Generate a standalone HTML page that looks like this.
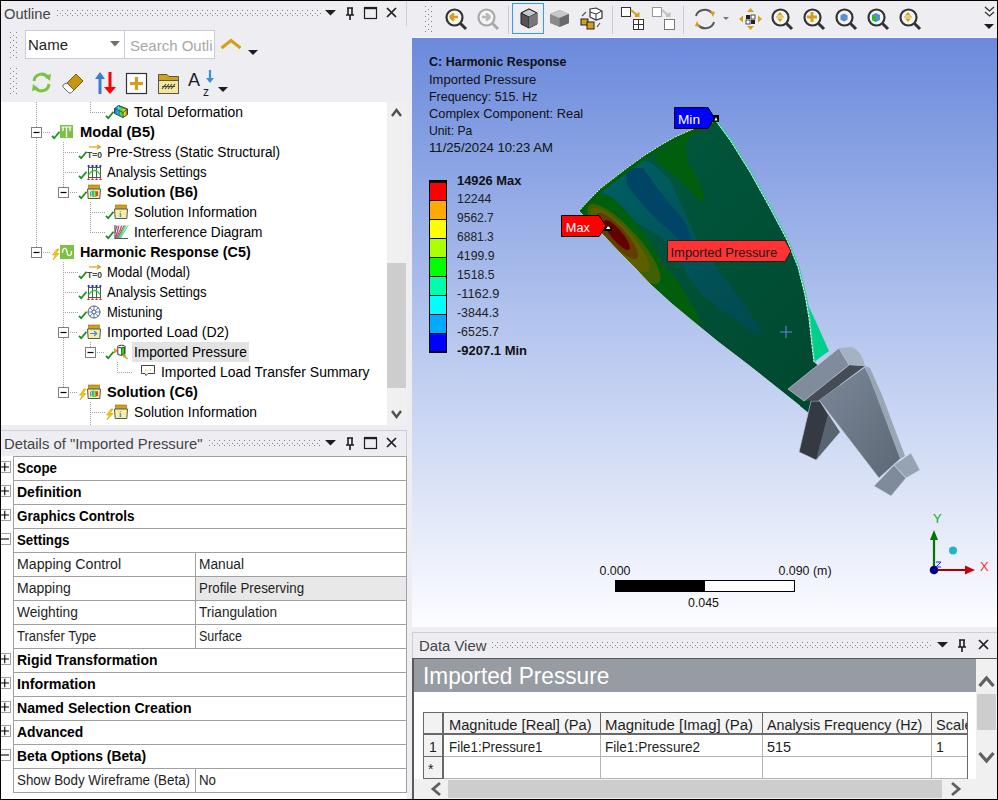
<!DOCTYPE html><html><head><meta charset="utf-8"><style>
*{margin:0;padding:0;box-sizing:border-box}
html,body{width:998px;height:800px;overflow:hidden;background:#EEEEF2;font-family:"Liberation Sans",sans-serif;color:#1E1E1E}
.a{position:absolute}
.t{position:absolute;white-space:nowrap;line-height:1}
svg{position:absolute;overflow:visible}
</style></head><body><div class="a" style="left:0px;top:0px;width:998px;height:1px;background:#000"></div><div class="a" style="left:0px;top:0px;width:1px;height:800px;background:#000"></div><div class="a" style="left:997px;top:0px;width:1px;height:800px;background:#000"></div><div class="a" style="left:0px;top:799px;width:998px;height:1px;background:#000"></div><div class="t" style="left:4px;top:6.30px;font-size:15px;color:#444;transform:scaleX(0.9804);transform-origin:0 0;">Outline</div><svg style="left:57px;top:10px" width="265" height="7" viewBox="0 0 265 7"><g fill="#858585"><rect x="0" y="0" width="1" height="1"/><rect x="0" y="5" width="1" height="1"/><rect x="3" y="3" width="1" height="1"/><rect x="5" y="0" width="1" height="1"/><rect x="5" y="5" width="1" height="1"/><rect x="8" y="3" width="1" height="1"/><rect x="10" y="0" width="1" height="1"/><rect x="10" y="5" width="1" height="1"/><rect x="13" y="3" width="1" height="1"/><rect x="15" y="0" width="1" height="1"/><rect x="15" y="5" width="1" height="1"/><rect x="18" y="3" width="1" height="1"/><rect x="20" y="0" width="1" height="1"/><rect x="20" y="5" width="1" height="1"/><rect x="23" y="3" width="1" height="1"/><rect x="25" y="0" width="1" height="1"/><rect x="25" y="5" width="1" height="1"/><rect x="28" y="3" width="1" height="1"/><rect x="30" y="0" width="1" height="1"/><rect x="30" y="5" width="1" height="1"/><rect x="33" y="3" width="1" height="1"/><rect x="35" y="0" width="1" height="1"/><rect x="35" y="5" width="1" height="1"/><rect x="38" y="3" width="1" height="1"/><rect x="40" y="0" width="1" height="1"/><rect x="40" y="5" width="1" height="1"/><rect x="43" y="3" width="1" height="1"/><rect x="45" y="0" width="1" height="1"/><rect x="45" y="5" width="1" height="1"/><rect x="48" y="3" width="1" height="1"/><rect x="50" y="0" width="1" height="1"/><rect x="50" y="5" width="1" height="1"/><rect x="53" y="3" width="1" height="1"/><rect x="55" y="0" width="1" height="1"/><rect x="55" y="5" width="1" height="1"/><rect x="58" y="3" width="1" height="1"/><rect x="60" y="0" width="1" height="1"/><rect x="60" y="5" width="1" height="1"/><rect x="63" y="3" width="1" height="1"/><rect x="65" y="0" width="1" height="1"/><rect x="65" y="5" width="1" height="1"/><rect x="68" y="3" width="1" height="1"/><rect x="70" y="0" width="1" height="1"/><rect x="70" y="5" width="1" height="1"/><rect x="73" y="3" width="1" height="1"/><rect x="75" y="0" width="1" height="1"/><rect x="75" y="5" width="1" height="1"/><rect x="78" y="3" width="1" height="1"/><rect x="80" y="0" width="1" height="1"/><rect x="80" y="5" width="1" height="1"/><rect x="83" y="3" width="1" height="1"/><rect x="85" y="0" width="1" height="1"/><rect x="85" y="5" width="1" height="1"/><rect x="88" y="3" width="1" height="1"/><rect x="90" y="0" width="1" height="1"/><rect x="90" y="5" width="1" height="1"/><rect x="93" y="3" width="1" height="1"/><rect x="95" y="0" width="1" height="1"/><rect x="95" y="5" width="1" height="1"/><rect x="98" y="3" width="1" height="1"/><rect x="100" y="0" width="1" height="1"/><rect x="100" y="5" width="1" height="1"/><rect x="103" y="3" width="1" height="1"/><rect x="105" y="0" width="1" height="1"/><rect x="105" y="5" width="1" height="1"/><rect x="108" y="3" width="1" height="1"/><rect x="110" y="0" width="1" height="1"/><rect x="110" y="5" width="1" height="1"/><rect x="113" y="3" width="1" height="1"/><rect x="115" y="0" width="1" height="1"/><rect x="115" y="5" width="1" height="1"/><rect x="118" y="3" width="1" height="1"/><rect x="120" y="0" width="1" height="1"/><rect x="120" y="5" width="1" height="1"/><rect x="123" y="3" width="1" height="1"/><rect x="125" y="0" width="1" height="1"/><rect x="125" y="5" width="1" height="1"/><rect x="128" y="3" width="1" height="1"/><rect x="130" y="0" width="1" height="1"/><rect x="130" y="5" width="1" height="1"/><rect x="133" y="3" width="1" height="1"/><rect x="135" y="0" width="1" height="1"/><rect x="135" y="5" width="1" height="1"/><rect x="138" y="3" width="1" height="1"/><rect x="140" y="0" width="1" height="1"/><rect x="140" y="5" width="1" height="1"/><rect x="143" y="3" width="1" height="1"/><rect x="145" y="0" width="1" height="1"/><rect x="145" y="5" width="1" height="1"/><rect x="148" y="3" width="1" height="1"/><rect x="150" y="0" width="1" height="1"/><rect x="150" y="5" width="1" height="1"/><rect x="153" y="3" width="1" height="1"/><rect x="155" y="0" width="1" height="1"/><rect x="155" y="5" width="1" height="1"/><rect x="158" y="3" width="1" height="1"/><rect x="160" y="0" width="1" height="1"/><rect x="160" y="5" width="1" height="1"/><rect x="163" y="3" width="1" height="1"/><rect x="165" y="0" width="1" height="1"/><rect x="165" y="5" width="1" height="1"/><rect x="168" y="3" width="1" height="1"/><rect x="170" y="0" width="1" height="1"/><rect x="170" y="5" width="1" height="1"/><rect x="173" y="3" width="1" height="1"/><rect x="175" y="0" width="1" height="1"/><rect x="175" y="5" width="1" height="1"/><rect x="178" y="3" width="1" height="1"/><rect x="180" y="0" width="1" height="1"/><rect x="180" y="5" width="1" height="1"/><rect x="183" y="3" width="1" height="1"/><rect x="185" y="0" width="1" height="1"/><rect x="185" y="5" width="1" height="1"/><rect x="188" y="3" width="1" height="1"/><rect x="190" y="0" width="1" height="1"/><rect x="190" y="5" width="1" height="1"/><rect x="193" y="3" width="1" height="1"/><rect x="195" y="0" width="1" height="1"/><rect x="195" y="5" width="1" height="1"/><rect x="198" y="3" width="1" height="1"/><rect x="200" y="0" width="1" height="1"/><rect x="200" y="5" width="1" height="1"/><rect x="203" y="3" width="1" height="1"/><rect x="205" y="0" width="1" height="1"/><rect x="205" y="5" width="1" height="1"/><rect x="208" y="3" width="1" height="1"/><rect x="210" y="0" width="1" height="1"/><rect x="210" y="5" width="1" height="1"/><rect x="213" y="3" width="1" height="1"/><rect x="215" y="0" width="1" height="1"/><rect x="215" y="5" width="1" height="1"/><rect x="218" y="3" width="1" height="1"/><rect x="220" y="0" width="1" height="1"/><rect x="220" y="5" width="1" height="1"/><rect x="223" y="3" width="1" height="1"/><rect x="225" y="0" width="1" height="1"/><rect x="225" y="5" width="1" height="1"/><rect x="228" y="3" width="1" height="1"/><rect x="230" y="0" width="1" height="1"/><rect x="230" y="5" width="1" height="1"/><rect x="233" y="3" width="1" height="1"/><rect x="235" y="0" width="1" height="1"/><rect x="235" y="5" width="1" height="1"/><rect x="238" y="3" width="1" height="1"/><rect x="240" y="0" width="1" height="1"/><rect x="240" y="5" width="1" height="1"/><rect x="243" y="3" width="1" height="1"/><rect x="245" y="0" width="1" height="1"/><rect x="245" y="5" width="1" height="1"/><rect x="248" y="3" width="1" height="1"/><rect x="250" y="0" width="1" height="1"/><rect x="250" y="5" width="1" height="1"/><rect x="253" y="3" width="1" height="1"/><rect x="255" y="0" width="1" height="1"/><rect x="255" y="5" width="1" height="1"/><rect x="258" y="3" width="1" height="1"/><rect x="260" y="0" width="1" height="1"/><rect x="260" y="5" width="1" height="1"/><rect x="263" y="3" width="1" height="1"/></g></svg><svg style="left:325px;top:10px" width="12" height="6" viewBox="0 0 12 6"><path d="M0 0 L11 0 L5.5 5.5 Z" fill="#1E1E1E"/></svg><svg style="left:345px;top:7px" width="10" height="13" viewBox="0 0 10 13"><path d="M2 1 H8 M3 1 V8 M7 1 V8 M1 8 H9 M5 8 V13" stroke="#1E1E1E" stroke-width="1.6" fill="none"/></svg><svg style="left:364px;top:7px" width="14" height="13" viewBox="0 0 14 13"><rect x="0.5" y="0.5" width="12" height="11" stroke="#1E1E1E" stroke-width="1.2" fill="none"/><rect x="0" y="0" width="13" height="2.2" fill="#1E1E1E"/></svg><svg style="left:386px;top:7px" width="11" height="11" viewBox="0 0 11 11"><path d="M1 1 L10 10 M10 1 L1 10" stroke="#1E1E1E" stroke-width="1.7"/></svg><div class="a" style="left:406px;top:1px;width:1px;height:25px;background:#CCCEDB"></div><svg style="left:10px;top:32px" width="8" height="27" viewBox="0 0 8 27"><g fill="#858585"><rect x="0" y="0" width="1" height="1"/><rect x="6" y="0" width="1" height="1"/><rect x="3" y="3" width="1" height="1"/><rect x="0" y="5" width="1" height="1"/><rect x="6" y="5" width="1" height="1"/><rect x="3" y="8" width="1" height="1"/><rect x="0" y="10" width="1" height="1"/><rect x="6" y="10" width="1" height="1"/><rect x="3" y="13" width="1" height="1"/><rect x="0" y="15" width="1" height="1"/><rect x="6" y="15" width="1" height="1"/><rect x="3" y="18" width="1" height="1"/><rect x="0" y="20" width="1" height="1"/><rect x="6" y="20" width="1" height="1"/><rect x="3" y="23" width="1" height="1"/><rect x="0" y="25" width="1" height="1"/><rect x="6" y="25" width="1" height="1"/></g></svg><div class="a" style="left:25px;top:30px;width:100px;height:29px;background:#fff;border:1px solid #C9CBDA"></div><div class="t" style="left:28px;top:37.30px;font-size:15px;color:#1E1E1E;">Name</div><svg style="left:110px;top:41px" width="11" height="6" viewBox="0 0 11 6"><path d="M0 0 H10 L5 5.5 Z" fill="#717171"/></svg><div class="a" style="left:124px;top:30px;width:91px;height:29px;background:#fff;border:1px solid #C9CBDA"></div><div class="t" style="left:130px;top:38.30px;font-size:15px;color:#A8A8A8;">Search Outli</div><svg style="left:220px;top:39px" width="23" height="10" viewBox="0 0 23 10"><path d="M1.5 9 L11 1.5 L20.5 9" stroke="#D4A017" stroke-width="3" fill="none"/></svg><svg style="left:248px;top:50px" width="11" height="6" viewBox="0 0 11 6"><path d="M0 0 H10 L5 5 Z" fill="#1E1E1E"/></svg><svg style="left:10px;top:68px" width="8" height="27" viewBox="0 0 8 27"><g fill="#858585"><rect x="0" y="0" width="1" height="1"/><rect x="6" y="0" width="1" height="1"/><rect x="3" y="3" width="1" height="1"/><rect x="0" y="5" width="1" height="1"/><rect x="6" y="5" width="1" height="1"/><rect x="3" y="8" width="1" height="1"/><rect x="0" y="10" width="1" height="1"/><rect x="6" y="10" width="1" height="1"/><rect x="3" y="13" width="1" height="1"/><rect x="0" y="15" width="1" height="1"/><rect x="6" y="15" width="1" height="1"/><rect x="3" y="18" width="1" height="1"/><rect x="0" y="20" width="1" height="1"/><rect x="6" y="20" width="1" height="1"/><rect x="3" y="23" width="1" height="1"/><rect x="0" y="25" width="1" height="1"/><rect x="6" y="25" width="1" height="1"/></g></svg><svg style="left:30px;top:72px" width="23" height="21" viewBox="0 0 23 21"><path d="M4 9 A7.5 7.5 0 0 1 18 6" stroke="#7DC242" stroke-width="3" fill="none"/><path d="M19 12 A7.5 7.5 0 0 1 5 15" stroke="#7DC242" stroke-width="3" fill="none"/><path d="M14 4 L21 2 L20 9 Z" fill="#7DC242"/><path d="M9 17 L2 19 L3 12 Z" fill="#7DC242"/></svg><svg style="left:62px;top:72px" width="22" height="22" viewBox="0 0 22 22"><path d="M5 11 L14 2 L21 9 L12 18 Z" fill="#C8960C" stroke="#7A5A10" stroke-width="1"/><path d="M5 11 L12 18 L9.5 20.5 Q8 22 6.5 20.5 L1.5 15.5 Q0 14 1.5 12.5 Z" fill="#fff" stroke="#666" stroke-width="1"/></svg><svg style="left:94px;top:72px" width="22" height="22" viewBox="0 0 22 22"><path d="M6 22 V6" stroke="#3A7BD5" stroke-width="3"/><path d="M1 7 L6 0 L11 7 Z" fill="#3A7BD5"/><path d="M16 0 V16" stroke="#F00" stroke-width="3"/><path d="M10 15 L16 22 L22 15 Z" fill="#F00"/></svg><svg style="left:126px;top:73px" width="22" height="21" viewBox="0 0 22 21"><rect x="0.5" y="0.5" width="20" height="20" fill="#fff" stroke="#333" stroke-width="1.2"/><path d="M10.5 4 V17 M4 10.5 H17" stroke="#D4A017" stroke-width="3.2"/></svg><svg style="left:157px;top:72px" width="23" height="23" viewBox="0 0 23 23"><path d="M1.5 2.5 H10 L12 4.5 H21.5 V21.5 H1.5 Z" fill="#D4A017" stroke="#555" stroke-width="1"/><rect x="1.5" y="8.5" width="20" height="13" fill="#F4E79A" stroke="#555" stroke-width="1"/><path d="M5 17 L9 12 M8 17 L12 12 M11 17 L15 12 M14 17 L18 12 M5 14.5 H18" stroke="#444" stroke-width="1.1" fill="none"/></svg><div class="t" style="left:188px;top:70.76px;font-size:18px;color:#1E1E1E;">A</div><div class="t" style="left:203px;top:85.84px;font-size:12px;color:#1E1E1E;">z</div><svg style="left:205px;top:70px" width="10" height="14" viewBox="0 0 10 14"><path d="M5 0 V9" stroke="#3A8EE6" stroke-width="2.2"/><path d="M1 8 L5 13 L9 8 Z" fill="#3A8EE6"/></svg><svg style="left:218px;top:87px" width="11" height="6" viewBox="0 0 11 6"><path d="M0 0 H10 L5 5 Z" fill="#1E1E1E"/></svg><div class="a" style="left:1px;top:102px;width:386px;height:323px;background:#fff"></div><div class="a" style="left:387px;top:102px;width:20px;height:323px;background:#F0F0F0"></div><svg style="left:391px;top:108px" width="11" height="9" viewBox="0 0 11 9"><path d="M1 8 L5.5 2 L10 8" stroke="#505050" stroke-width="2.4" fill="none"/></svg><div class="a" style="left:387px;top:263px;width:19px;height:125px;background:#CDCDCD"></div><svg style="left:391px;top:410px" width="11" height="9" viewBox="0 0 11 9"><path d="M1 1 L5.5 7 L10 1" stroke="#505050" stroke-width="2.4" fill="none"/></svg><div class="a" style="left:36px;top:102px;width:1px;height:25px;background-image:linear-gradient(to bottom,#A0A0A0 50%,transparent 50%);background-size:1px 2px"></div><div class="a" style="left:36px;top:138px;width:1px;height:109px;background-image:linear-gradient(to bottom,#A0A0A0 50%,transparent 50%);background-size:1px 2px"></div><div class="a" style="left:90px;top:102px;width:1px;height:10px;background-image:linear-gradient(to bottom,#A0A0A0 50%,transparent 50%);background-size:1px 2px"></div><div class="a" style="left:63px;top:142px;width:1px;height:45px;background-image:linear-gradient(to bottom,#A0A0A0 50%,transparent 50%);background-size:1px 2px"></div><div class="a" style="left:90px;top:202px;width:1px;height:30px;background-image:linear-gradient(to bottom,#A0A0A0 50%,transparent 50%);background-size:1px 2px"></div><div class="a" style="left:63px;top:262px;width:1px;height:125px;background-image:linear-gradient(to bottom,#A0A0A0 50%,transparent 50%);background-size:1px 2px"></div><div class="a" style="left:90px;top:342px;width:1px;height:5px;background-image:linear-gradient(to bottom,#A0A0A0 50%,transparent 50%);background-size:1px 2px"></div><div class="a" style="left:117px;top:362px;width:1px;height:10px;background-image:linear-gradient(to bottom,#A0A0A0 50%,transparent 50%);background-size:1px 2px"></div><div class="a" style="left:90px;top:402px;width:1px;height:23px;background-image:linear-gradient(to bottom,#A0A0A0 50%,transparent 50%);background-size:1px 2px"></div><div class="a" style="left:90px;top:112px;width:15px;height:1px;background-image:linear-gradient(to right,#A0A0A0 50%,transparent 50%);background-size:2px 1px"></div><svg style="left:105px;top:111px" width="9" height="8" viewBox="0 0 9 8"><path d="M1 4.8 L3.2 7.2 L8.5 0.8" stroke="#14901A" stroke-width="1.8" fill="none"/></svg><svg style="left:114px;top:105px" width="14" height="14" viewBox="0 0 14 14"><defs><linearGradient id="rb" x1="0" x2="1" y1="0" y2="0"><stop offset="0" stop-color="#2050F0"/><stop offset="0.3" stop-color="#20E0E0"/><stop offset="0.55" stop-color="#40E020"/><stop offset="0.8" stop-color="#F0E010"/><stop offset="1" stop-color="#F02010"/></linearGradient></defs><path d="M0.5 3.5 L4.5 0.5 L13.5 4 L13.5 9.5 L9 12.5 L0.5 8.5 Z" fill="url(#rb)" stroke="#444" stroke-width="1"/><path d="M0.5 3.5 L9 7.5 L13.5 4 M9 7.5 V12.5 M5 5.5 V10.5 M4.5 0.5 L13 4.5" stroke="#444" stroke-width="0.9" fill="none"/></svg><div class="t" style="left:134px;top:105.15px;font-size:14px;color:#000;transform:scaleX(0.9939);transform-origin:0 0;">Total Deformation</div><svg style="left:31px;top:127px" width="11" height="11" viewBox="0 0 11 11"><rect x="0.5" y="0.5" width="10" height="10" fill="#fff" stroke="#808080" stroke-width="1"/><path d="M2.5 5.5 H8.5" stroke="#000" stroke-width="1.2"/></svg><div class="a" style="left:43px;top:132px;width:8px;height:1px;background-image:linear-gradient(to right,#A0A0A0 50%,transparent 50%);background-size:2px 1px"></div><svg style="left:51px;top:131px" width="9" height="8" viewBox="0 0 9 8"><path d="M1 4.8 L3.2 7.2 L8.5 0.8" stroke="#14901A" stroke-width="1.8" fill="none"/></svg><svg style="left:60px;top:125px" width="14" height="14" viewBox="0 0 14 14"><rect x="0" y="0" width="13" height="13" fill="#7DC242"/><path d="M3 2 V6 M6.5 2 V12 M10 2 V6" stroke="#fff" stroke-width="1.3"/><path d="M1.5 2 H11.5" stroke="#fff" stroke-width="1"/></svg><div class="t" style="left:80px;top:124.81px;font-size:14.4px;color:#000;font-weight:bold;transform:scaleX(1.0195);transform-origin:0 0;">Modal (B5)</div><div class="a" style="left:63px;top:152px;width:15px;height:1px;background-image:linear-gradient(to right,#A0A0A0 50%,transparent 50%);background-size:2px 1px"></div><svg style="left:78px;top:151px" width="9" height="8" viewBox="0 0 9 8"><path d="M1 4.8 L3.2 7.2 L8.5 0.8" stroke="#14901A" stroke-width="1.8" fill="none"/></svg><svg style="left:87px;top:145px" width="14" height="14" viewBox="0 0 14 14"><path d="M2 2 H13" stroke="#D4A017" stroke-width="1.2"/><path d="M10 0 L13.5 2 L10 4" stroke="#D4A017" stroke-width="1.1" fill="none"/><text x="0" y="13" font-size="8.5" font-weight="bold" fill="#444" font-family="Liberation Sans">T=0</text></svg><div class="t" style="left:107px;top:145.15px;font-size:14px;color:#000;transform:scaleX(0.9713);transform-origin:0 0;">Pre-Stress (Static Structural)</div><div class="a" style="left:63px;top:172px;width:15px;height:1px;background-image:linear-gradient(to right,#A0A0A0 50%,transparent 50%);background-size:2px 1px"></div><svg style="left:78px;top:171px" width="9" height="8" viewBox="0 0 9 8"><path d="M1 4.8 L3.2 7.2 L8.5 0.8" stroke="#14901A" stroke-width="1.8" fill="none"/></svg><svg style="left:87px;top:165px" width="14" height="14" viewBox="0 0 14 14"><rect x="1.5" y="2.5" width="12" height="10" fill="#fff" stroke="#555" stroke-width="1"/><path d="M5.5 2.5 V12.5 M9.5 2.5 V12.5" stroke="#555" stroke-width="1"/><path d="M0.5 1 H3 M4 1 H7 M8 1 H11 M12 1 H14.5 M1.5 0 V2 M5.5 0 V2 M9.5 0 V2 M13.5 0 V2" stroke="#1030F0" stroke-width="1.1"/><path d="M1.5 13 L0 15 H3 Z M5.5 13 L4 15 H7 Z M9.5 13 L8 15 H11 Z M13.5 13 L12 15 H15 Z" fill="#F01010"/><path d="M1.5 10 Q7.5 1 13.5 10" stroke="#20D020" stroke-width="1.3" fill="none"/></svg><div class="t" style="left:107px;top:165.15px;font-size:14px;color:#000;transform:scaleX(0.9335);transform-origin:0 0;">Analysis Settings</div><svg style="left:58px;top:187px" width="11" height="11" viewBox="0 0 11 11"><rect x="0.5" y="0.5" width="10" height="10" fill="#fff" stroke="#808080" stroke-width="1"/><path d="M2.5 5.5 H8.5" stroke="#000" stroke-width="1.2"/></svg><div class="a" style="left:70px;top:192px;width:8px;height:1px;background-image:linear-gradient(to right,#A0A0A0 50%,transparent 50%);background-size:2px 1px"></div><svg style="left:78px;top:191px" width="9" height="8" viewBox="0 0 9 8"><path d="M1 4.8 L3.2 7.2 L8.5 0.8" stroke="#14901A" stroke-width="1.8" fill="none"/></svg><svg style="left:87px;top:185px" width="14" height="14" viewBox="0 0 14 14"><rect x="1.5" y="0" width="11" height="4.5" fill="#D4A017" stroke="#8A6A10" stroke-width="0.6"/><path d="M0.5 4 H13.5 L12.8 13.5 H1.2 Z" fill="#F8EEA8" stroke="#555" stroke-width="1"/><path d="M3 7 L6 5.5 L11 6.5 V10.5 L8 12 L3 11 Z" fill="#40A0E0"/><path d="M6 5.8 L9 6.2 V11.5 L6 11.2 Z" fill="#30D040"/><path d="M9 6.4 L11 6.5 V10.5 L9 11.5 Z" fill="#F04020"/><path d="M4.5 7 V11 M7.5 6 V11.5" stroke="#F0E020" stroke-width="0.8"/></svg><div class="t" style="left:107px;top:184.81px;font-size:14.4px;color:#000;font-weight:bold;transform:scaleX(1.0161);transform-origin:0 0;">Solution (B6)</div><div class="a" style="left:90px;top:212px;width:15px;height:1px;background-image:linear-gradient(to right,#A0A0A0 50%,transparent 50%);background-size:2px 1px"></div><svg style="left:105px;top:211px" width="9" height="8" viewBox="0 0 9 8"><path d="M1 4.8 L3.2 7.2 L8.5 0.8" stroke="#14901A" stroke-width="1.8" fill="none"/></svg><svg style="left:114px;top:205px" width="14" height="14" viewBox="0 0 14 14"><rect x="1.5" y="0" width="11" height="4.5" fill="#D4A017" stroke="#8A6A10" stroke-width="0.6"/><path d="M0.5 4 H13.5 L12.8 13.5 H1.2 Z" fill="#F8EEA8" stroke="#555" stroke-width="1"/><text x="5" y="12" font-size="8.5" font-weight="bold" fill="#3A8EE6" font-family="Liberation Serif">i</text></svg><div class="t" style="left:134px;top:205.15px;font-size:14px;color:#000;transform:scaleX(0.9882);transform-origin:0 0;">Solution Information</div><div class="a" style="left:90px;top:232px;width:15px;height:1px;background-image:linear-gradient(to right,#A0A0A0 50%,transparent 50%);background-size:2px 1px"></div><svg style="left:105px;top:231px" width="9" height="8" viewBox="0 0 9 8"><path d="M1 4.8 L3.2 7.2 L8.5 0.8" stroke="#14901A" stroke-width="1.8" fill="none"/></svg><svg style="left:114px;top:225px" width="14" height="14" viewBox="0 0 14 14"><path d="M1 0.5 H14 L6 13.5 H1 Z" fill="#fff"/><path d="M1.5 13 L5 0.5 M2.5 13 L8 0.5 M4 13 L10 0.5 M1 8 L3 0.5" stroke="#E03030" stroke-width="1"/><path d="M2 12 Q5 5 4 1 M3.5 13 Q8 6 7 1" stroke="#3060E0" stroke-width="0.6" fill="none"/><path d="M5.5 13 L12 0.5 M4.5 13 L11 0.5 M6.5 13 L14 0.5" stroke="#30D050" stroke-width="0.9"/><path d="M1 0 V13.5 H14" stroke="#555" stroke-width="1.2" fill="none"/></svg><div class="t" style="left:134px;top:225.15px;font-size:14px;color:#000;transform:scaleX(0.9769);transform-origin:0 0;">Interference Diagram</div><svg style="left:31px;top:247px" width="11" height="11" viewBox="0 0 11 11"><rect x="0.5" y="0.5" width="10" height="10" fill="#fff" stroke="#808080" stroke-width="1"/><path d="M2.5 5.5 H8.5" stroke="#000" stroke-width="1.2"/></svg><div class="a" style="left:43px;top:252px;width:8px;height:1px;background-image:linear-gradient(to right,#A0A0A0 50%,transparent 50%);background-size:2px 1px"></div><svg style="left:51px;top:249px" width="9" height="11" viewBox="0 0 9 11"><path d="M6 0 L1.5 6 H4.5 L2 11 L8 4.5 H5 L8 0 Z" fill="#F5D000" stroke="#C9A000" stroke-width="0.6"/></svg><svg style="left:60px;top:245px" width="14" height="14" viewBox="0 0 14 14"><rect x="0" y="0" width="14" height="14" fill="#7DC242"/><path d="M2.5 8 C2.5 2, 6.5 2, 7 7 S11.5 12, 11.5 6" stroke="#fff" stroke-width="1.4" fill="none"/></svg><div class="t" style="left:80px;top:244.81px;font-size:14.4px;color:#000;font-weight:bold;transform:scaleX(0.9974);transform-origin:0 0;">Harmonic Response (C5)</div><div class="a" style="left:63px;top:272px;width:15px;height:1px;background-image:linear-gradient(to right,#A0A0A0 50%,transparent 50%);background-size:2px 1px"></div><svg style="left:78px;top:271px" width="9" height="8" viewBox="0 0 9 8"><path d="M1 4.8 L3.2 7.2 L8.5 0.8" stroke="#14901A" stroke-width="1.8" fill="none"/></svg><svg style="left:87px;top:265px" width="14" height="14" viewBox="0 0 14 14"><path d="M2 2 H13" stroke="#D4A017" stroke-width="1.2"/><path d="M10 0 L13.5 2 L10 4" stroke="#D4A017" stroke-width="1.1" fill="none"/><text x="0" y="13" font-size="8.5" font-weight="bold" fill="#444" font-family="Liberation Sans">T=0</text></svg><div class="t" style="left:107px;top:265.15px;font-size:14px;color:#000;transform:scaleX(0.9282);transform-origin:0 0;">Modal (Modal)</div><div class="a" style="left:63px;top:292px;width:15px;height:1px;background-image:linear-gradient(to right,#A0A0A0 50%,transparent 50%);background-size:2px 1px"></div><svg style="left:78px;top:291px" width="9" height="8" viewBox="0 0 9 8"><path d="M1 4.8 L3.2 7.2 L8.5 0.8" stroke="#14901A" stroke-width="1.8" fill="none"/></svg><svg style="left:87px;top:285px" width="14" height="14" viewBox="0 0 14 14"><rect x="1.5" y="2.5" width="12" height="10" fill="#fff" stroke="#555" stroke-width="1"/><path d="M5.5 2.5 V12.5 M9.5 2.5 V12.5" stroke="#555" stroke-width="1"/><path d="M0.5 1 H3 M4 1 H7 M8 1 H11 M12 1 H14.5 M1.5 0 V2 M5.5 0 V2 M9.5 0 V2 M13.5 0 V2" stroke="#1030F0" stroke-width="1.1"/><path d="M1.5 13 L0 15 H3 Z M5.5 13 L4 15 H7 Z M9.5 13 L8 15 H11 Z M13.5 13 L12 15 H15 Z" fill="#F01010"/><path d="M1.5 10 Q7.5 1 13.5 10" stroke="#20D020" stroke-width="1.3" fill="none"/></svg><div class="t" style="left:107px;top:285.15px;font-size:14px;color:#000;transform:scaleX(0.9335);transform-origin:0 0;">Analysis Settings</div><div class="a" style="left:63px;top:312px;width:15px;height:1px;background-image:linear-gradient(to right,#A0A0A0 50%,transparent 50%);background-size:2px 1px"></div><svg style="left:78px;top:311px" width="9" height="8" viewBox="0 0 9 8"><path d="M1 4.8 L3.2 7.2 L8.5 0.8" stroke="#14901A" stroke-width="1.8" fill="none"/></svg><svg style="left:87px;top:305px" width="14" height="14" viewBox="0 0 14 14"><circle cx="7" cy="7" r="6" fill="#fff" stroke="#555" stroke-width="1"/><circle cx="7" cy="7" r="2" fill="#fff" stroke="#555" stroke-width="1"/><path d="M7 1 V5 M7 9 V13 M1 7 H5 M9 7 H13 M2.8 2.8 L5.6 5.6 M8.4 8.4 L11.2 11.2 M11.2 2.8 L8.4 5.6 M5.6 8.4 L2.8 11.2" stroke="#3A7BD5" stroke-width="0.9"/></svg><div class="t" style="left:107px;top:305.15px;font-size:14px;color:#000;transform:scaleX(0.9250);transform-origin:0 0;">Mistuning</div><svg style="left:58px;top:327px" width="11" height="11" viewBox="0 0 11 11"><rect x="0.5" y="0.5" width="10" height="10" fill="#fff" stroke="#808080" stroke-width="1"/><path d="M2.5 5.5 H8.5" stroke="#000" stroke-width="1.2"/></svg><div class="a" style="left:70px;top:332px;width:8px;height:1px;background-image:linear-gradient(to right,#A0A0A0 50%,transparent 50%);background-size:2px 1px"></div><svg style="left:78px;top:331px" width="9" height="8" viewBox="0 0 9 8"><path d="M1 4.8 L3.2 7.2 L8.5 0.8" stroke="#14901A" stroke-width="1.8" fill="none"/></svg><svg style="left:87px;top:325px" width="14" height="14" viewBox="0 0 14 14"><rect x="1.5" y="0" width="11" height="4.5" fill="#D4A017" stroke="#8A6A10" stroke-width="0.6"/><path d="M0.5 4 H13.5 L12.8 13.5 H1.2 Z" fill="#F8EEA8" stroke="#555" stroke-width="1"/><path d="M3 8.5 H9.5 M7 6 L9.8 8.5 L7 11" stroke="#3A8EE6" stroke-width="1.2" fill="none"/></svg><div class="t" style="left:107px;top:325.15px;font-size:14px;color:#000;transform:scaleX(1.0055);transform-origin:0 0;">Imported Load (D2)</div><svg style="left:85px;top:347px" width="11" height="11" viewBox="0 0 11 11"><rect x="0.5" y="0.5" width="10" height="10" fill="#fff" stroke="#808080" stroke-width="1"/><path d="M2.5 5.5 H8.5" stroke="#000" stroke-width="1.2"/></svg><div class="a" style="left:97px;top:352px;width:8px;height:1px;background-image:linear-gradient(to right,#A0A0A0 50%,transparent 50%);background-size:2px 1px"></div><svg style="left:105px;top:351px" width="9" height="8" viewBox="0 0 9 8"><path d="M1 4.8 L3.2 7.2 L8.5 0.8" stroke="#14901A" stroke-width="1.8" fill="none"/></svg><svg style="left:114px;top:345px" width="14" height="14" viewBox="0 0 14 14"><path d="M0 3 L4 5.8 L0 8.7 Z" fill="#D4A017"/><path d="M3.8 1.5 V9.5 Q7 11.5 11 9 V1.5" fill="#fff" stroke="#333" stroke-width="1"/><ellipse cx="7.4" cy="1.5" rx="3.6" ry="1.3" fill="#fff" stroke="#333" stroke-width="1"/><path d="M7.5 3 L10.5 2 V8.5 L7.5 10 Z" fill="#10E010" stroke="#333" stroke-width="0.7"/><path d="M13.5 14 L10 10.5" stroke="#D4A017" stroke-width="1.4"/><path d="M8.5 9 L12.5 10 L9.5 13 Z" fill="#D4A017"/></svg><div class="a" style="left:132px;top:342px;width:117px;height:20px;background:#E3E3E3"></div><div class="t" style="left:134px;top:345.15px;font-size:14px;color:#000;transform:scaleX(0.9791);transform-origin:0 0;">Imported Pressure</div><div class="a" style="left:117px;top:372px;width:15px;height:1px;background-image:linear-gradient(to right,#A0A0A0 50%,transparent 50%);background-size:2px 1px"></div><svg style="left:141px;top:365px" width="14" height="14" viewBox="0 0 14 14"><path d="M0.5 0.5 H13.5 V8.5 H7 L5 10.5 L4 8.5 H0.5 Z" fill="#fff" stroke="#444" stroke-width="1"/><path d="M4 5 H5 M6.5 5 H7.5 M9 5 H10" stroke="#D4A017" stroke-width="1"/></svg><div class="t" style="left:161px;top:365.15px;font-size:14px;color:#000;transform:scaleX(0.9961);transform-origin:0 0;">Imported Load Transfer Summary</div><svg style="left:58px;top:387px" width="11" height="11" viewBox="0 0 11 11"><rect x="0.5" y="0.5" width="10" height="10" fill="#fff" stroke="#808080" stroke-width="1"/><path d="M2.5 5.5 H8.5" stroke="#000" stroke-width="1.2"/></svg><div class="a" style="left:70px;top:392px;width:8px;height:1px;background-image:linear-gradient(to right,#A0A0A0 50%,transparent 50%);background-size:2px 1px"></div><svg style="left:78px;top:389px" width="9" height="11" viewBox="0 0 9 11"><path d="M6 0 L1.5 6 H4.5 L2 11 L8 4.5 H5 L8 0 Z" fill="#F5D000" stroke="#C9A000" stroke-width="0.6"/></svg><svg style="left:87px;top:385px" width="14" height="14" viewBox="0 0 14 14"><rect x="1.5" y="0" width="11" height="4.5" fill="#D4A017" stroke="#8A6A10" stroke-width="0.6"/><path d="M0.5 4 H13.5 L12.8 13.5 H1.2 Z" fill="#F8EEA8" stroke="#555" stroke-width="1"/><path d="M3 7 L6 5.5 L11 6.5 V10.5 L8 12 L3 11 Z" fill="#40A0E0"/><path d="M6 5.8 L9 6.2 V11.5 L6 11.2 Z" fill="#30D040"/><path d="M9 6.4 L11 6.5 V10.5 L9 11.5 Z" fill="#F04020"/><path d="M4.5 7 V11 M7.5 6 V11.5" stroke="#F0E020" stroke-width="0.8"/></svg><div class="t" style="left:107px;top:384.81px;font-size:14.4px;color:#000;font-weight:bold;transform:scaleX(1.0161);transform-origin:0 0;">Solution (C6)</div><div class="a" style="left:90px;top:412px;width:15px;height:1px;background-image:linear-gradient(to right,#A0A0A0 50%,transparent 50%);background-size:2px 1px"></div><svg style="left:105px;top:409px" width="9" height="11" viewBox="0 0 9 11"><path d="M6 0 L1.5 6 H4.5 L2 11 L8 4.5 H5 L8 0 Z" fill="#F5D000" stroke="#C9A000" stroke-width="0.6"/></svg><svg style="left:114px;top:405px" width="14" height="14" viewBox="0 0 14 14"><rect x="1.5" y="0" width="11" height="4.5" fill="#D4A017" stroke="#8A6A10" stroke-width="0.6"/><path d="M0.5 4 H13.5 L12.8 13.5 H1.2 Z" fill="#F8EEA8" stroke="#555" stroke-width="1"/><text x="5" y="12" font-size="8.5" font-weight="bold" fill="#3A8EE6" font-family="Liberation Serif">i</text></svg><div class="t" style="left:134px;top:405.15px;font-size:14px;color:#000;transform:scaleX(0.9882);transform-origin:0 0;">Solution Information</div><div class="a" style="left:1px;top:425px;width:406px;height:5px;background:#EEEEF2"></div><div class="a" style="left:1px;top:430px;width:406px;height:1px;background:#CCCEDB"></div><div class="a" style="left:406px;top:430px;width:1px;height:26px;background:#CCCEDB"></div><div class="t" style="left:4px;top:436.30px;font-size:15px;color:#444;transform:scaleX(0.9886);transform-origin:0 0;">Details of "Imported Pressure"</div><svg style="left:209px;top:440px" width="113" height="7" viewBox="0 0 113 7"><g fill="#858585"><rect x="0" y="0" width="1" height="1"/><rect x="0" y="5" width="1" height="1"/><rect x="3" y="3" width="1" height="1"/><rect x="5" y="0" width="1" height="1"/><rect x="5" y="5" width="1" height="1"/><rect x="8" y="3" width="1" height="1"/><rect x="10" y="0" width="1" height="1"/><rect x="10" y="5" width="1" height="1"/><rect x="13" y="3" width="1" height="1"/><rect x="15" y="0" width="1" height="1"/><rect x="15" y="5" width="1" height="1"/><rect x="18" y="3" width="1" height="1"/><rect x="20" y="0" width="1" height="1"/><rect x="20" y="5" width="1" height="1"/><rect x="23" y="3" width="1" height="1"/><rect x="25" y="0" width="1" height="1"/><rect x="25" y="5" width="1" height="1"/><rect x="28" y="3" width="1" height="1"/><rect x="30" y="0" width="1" height="1"/><rect x="30" y="5" width="1" height="1"/><rect x="33" y="3" width="1" height="1"/><rect x="35" y="0" width="1" height="1"/><rect x="35" y="5" width="1" height="1"/><rect x="38" y="3" width="1" height="1"/><rect x="40" y="0" width="1" height="1"/><rect x="40" y="5" width="1" height="1"/><rect x="43" y="3" width="1" height="1"/><rect x="45" y="0" width="1" height="1"/><rect x="45" y="5" width="1" height="1"/><rect x="48" y="3" width="1" height="1"/><rect x="50" y="0" width="1" height="1"/><rect x="50" y="5" width="1" height="1"/><rect x="53" y="3" width="1" height="1"/><rect x="55" y="0" width="1" height="1"/><rect x="55" y="5" width="1" height="1"/><rect x="58" y="3" width="1" height="1"/><rect x="60" y="0" width="1" height="1"/><rect x="60" y="5" width="1" height="1"/><rect x="63" y="3" width="1" height="1"/><rect x="65" y="0" width="1" height="1"/><rect x="65" y="5" width="1" height="1"/><rect x="68" y="3" width="1" height="1"/><rect x="70" y="0" width="1" height="1"/><rect x="70" y="5" width="1" height="1"/><rect x="73" y="3" width="1" height="1"/><rect x="75" y="0" width="1" height="1"/><rect x="75" y="5" width="1" height="1"/><rect x="78" y="3" width="1" height="1"/><rect x="80" y="0" width="1" height="1"/><rect x="80" y="5" width="1" height="1"/><rect x="83" y="3" width="1" height="1"/><rect x="85" y="0" width="1" height="1"/><rect x="85" y="5" width="1" height="1"/><rect x="88" y="3" width="1" height="1"/><rect x="90" y="0" width="1" height="1"/><rect x="90" y="5" width="1" height="1"/><rect x="93" y="3" width="1" height="1"/><rect x="95" y="0" width="1" height="1"/><rect x="95" y="5" width="1" height="1"/><rect x="98" y="3" width="1" height="1"/><rect x="100" y="0" width="1" height="1"/><rect x="100" y="5" width="1" height="1"/><rect x="103" y="3" width="1" height="1"/><rect x="105" y="0" width="1" height="1"/><rect x="105" y="5" width="1" height="1"/><rect x="108" y="3" width="1" height="1"/><rect x="110" y="0" width="1" height="1"/><rect x="110" y="5" width="1" height="1"/></g></svg><svg style="left:325px;top:440px" width="12" height="6" viewBox="0 0 12 6"><path d="M0 0 L11 0 L5.5 5.5 Z" fill="#1E1E1E"/></svg><svg style="left:345px;top:437px" width="10" height="13" viewBox="0 0 10 13"><path d="M2 1 H8 M3 1 V8 M7 1 V8 M1 8 H9 M5 8 V13" stroke="#1E1E1E" stroke-width="1.6" fill="none"/></svg><svg style="left:364px;top:437px" width="14" height="13" viewBox="0 0 14 13"><rect x="0.5" y="0.5" width="12" height="11" stroke="#1E1E1E" stroke-width="1.2" fill="none"/><rect x="0" y="0" width="13" height="2.2" fill="#1E1E1E"/></svg><svg style="left:386px;top:437px" width="11" height="11" viewBox="0 0 11 11"><path d="M1 1 L10 10 M10 1 L1 10" stroke="#1E1E1E" stroke-width="1.7"/></svg><div class="a" style="left:1px;top:456px;width:406px;height:343px;background:#fff"></div><div class="a" style="left:13px;top:456px;width:394px;height:1px;background:#A0A0A0"></div><div class="a" style="left:13px;top:456px;width:1px;height:25px;background:#A0A0A0"></div><div class="a" style="left:406px;top:456px;width:1px;height:25px;background:#A0A0A0"></div><svg style="left:-2px;top:461px" width="13" height="12" viewBox="0 0 13 12"><rect x="0.5" y="0.5" width="12" height="11" fill="#fff" stroke="#A0A0A0" stroke-width="1"/><path d="M2.5 6 H11 M6.75 1.8 V10.2" stroke="#000" stroke-width="1.1"/></svg><div class="t" style="left:17px;top:461.06px;font-size:14.1px;color:#000;font-weight:bold;transform:scaleX(0.9453);transform-origin:0 0;">Scope</div><div class="a" style="left:13px;top:480px;width:394px;height:1px;background:#A0A0A0"></div><div class="a" style="left:13px;top:480px;width:1px;height:25px;background:#A0A0A0"></div><div class="a" style="left:406px;top:480px;width:1px;height:25px;background:#A0A0A0"></div><svg style="left:-2px;top:485px" width="13" height="12" viewBox="0 0 13 12"><rect x="0.5" y="0.5" width="12" height="11" fill="#fff" stroke="#A0A0A0" stroke-width="1"/><path d="M2.5 6 H11 M6.75 1.8 V10.2" stroke="#000" stroke-width="1.1"/></svg><div class="t" style="left:17px;top:485.06px;font-size:14.1px;color:#000;font-weight:bold;transform:scaleX(0.9925);transform-origin:0 0;">Definition</div><div class="a" style="left:13px;top:504px;width:394px;height:1px;background:#A0A0A0"></div><div class="a" style="left:13px;top:504px;width:1px;height:25px;background:#A0A0A0"></div><div class="a" style="left:406px;top:504px;width:1px;height:25px;background:#A0A0A0"></div><svg style="left:-2px;top:509px" width="13" height="12" viewBox="0 0 13 12"><rect x="0.5" y="0.5" width="12" height="11" fill="#fff" stroke="#A0A0A0" stroke-width="1"/><path d="M2.5 6 H11 M6.75 1.8 V10.2" stroke="#000" stroke-width="1.1"/></svg><div class="t" style="left:17px;top:509.06px;font-size:14.1px;color:#000;font-weight:bold;transform:scaleX(0.9554);transform-origin:0 0;">Graphics Controls</div><div class="a" style="left:13px;top:528px;width:394px;height:1px;background:#A0A0A0"></div><div class="a" style="left:13px;top:528px;width:1px;height:25px;background:#A0A0A0"></div><div class="a" style="left:406px;top:528px;width:1px;height:25px;background:#A0A0A0"></div><svg style="left:-2px;top:533px" width="13" height="12" viewBox="0 0 13 12"><rect x="0.5" y="0.5" width="12" height="11" fill="#fff" stroke="#A0A0A0" stroke-width="1"/><path d="M2.5 6 H11" stroke="#000" stroke-width="1.1"/></svg><div class="t" style="left:17px;top:533.06px;font-size:14.1px;color:#000;font-weight:bold;transform:scaleX(0.9441);transform-origin:0 0;">Settings</div><div class="a" style="left:13px;top:552px;width:394px;height:1px;background:#A0A0A0"></div><div class="a" style="left:13px;top:552px;width:1px;height:25px;background:#A0A0A0"></div><div class="a" style="left:406px;top:552px;width:1px;height:25px;background:#A0A0A0"></div><div class="a" style="left:195px;top:552px;width:1px;height:25px;background:#A0A0A0"></div><div class="t" style="left:17px;top:557.15px;font-size:14px;color:#1E1E1E;transform:scaleX(1.0129);transform-origin:0 0;">Mapping Control</div><div class="t" style="left:199px;top:557.15px;font-size:14px;color:#1E1E1E;transform:scaleX(0.9806);transform-origin:0 0;">Manual</div><div class="a" style="left:13px;top:576px;width:394px;height:1px;background:#A0A0A0"></div><div class="a" style="left:13px;top:576px;width:1px;height:25px;background:#A0A0A0"></div><div class="a" style="left:406px;top:576px;width:1px;height:25px;background:#A0A0A0"></div><div class="a" style="left:196px;top:577px;width:210px;height:23px;background:#E8E8E8"></div><div class="a" style="left:195px;top:576px;width:1px;height:25px;background:#A0A0A0"></div><div class="t" style="left:17px;top:581.15px;font-size:14px;color:#1E1E1E;transform:scaleX(1.0015);transform-origin:0 0;">Mapping</div><div class="t" style="left:199px;top:581.15px;font-size:14px;color:#1E1E1E;transform:scaleX(0.9506);transform-origin:0 0;">Profile Preserving</div><div class="a" style="left:13px;top:600px;width:394px;height:1px;background:#A0A0A0"></div><div class="a" style="left:13px;top:600px;width:1px;height:25px;background:#A0A0A0"></div><div class="a" style="left:406px;top:600px;width:1px;height:25px;background:#A0A0A0"></div><div class="a" style="left:195px;top:600px;width:1px;height:25px;background:#A0A0A0"></div><div class="t" style="left:17px;top:605.15px;font-size:14px;color:#1E1E1E;transform:scaleX(0.9801);transform-origin:0 0;">Weighting</div><div class="t" style="left:199px;top:605.15px;font-size:14px;color:#1E1E1E;transform:scaleX(0.9705);transform-origin:0 0;">Triangulation</div><div class="a" style="left:13px;top:624px;width:394px;height:1px;background:#A0A0A0"></div><div class="a" style="left:13px;top:624px;width:1px;height:25px;background:#A0A0A0"></div><div class="a" style="left:406px;top:624px;width:1px;height:25px;background:#A0A0A0"></div><div class="a" style="left:195px;top:624px;width:1px;height:25px;background:#A0A0A0"></div><div class="t" style="left:17px;top:629.15px;font-size:14px;color:#1E1E1E;transform:scaleX(0.9262);transform-origin:0 0;">Transfer Type</div><div class="t" style="left:199px;top:629.15px;font-size:14px;color:#1E1E1E;transform:scaleX(0.8915);transform-origin:0 0;">Surface</div><div class="a" style="left:13px;top:648px;width:394px;height:1px;background:#A0A0A0"></div><div class="a" style="left:13px;top:648px;width:1px;height:25px;background:#A0A0A0"></div><div class="a" style="left:406px;top:648px;width:1px;height:25px;background:#A0A0A0"></div><svg style="left:-2px;top:653px" width="13" height="12" viewBox="0 0 13 12"><rect x="0.5" y="0.5" width="12" height="11" fill="#fff" stroke="#A0A0A0" stroke-width="1"/><path d="M2.5 6 H11 M6.75 1.8 V10.2" stroke="#000" stroke-width="1.1"/></svg><div class="t" style="left:17px;top:653.06px;font-size:14.1px;color:#000;font-weight:bold;transform:scaleX(0.9912);transform-origin:0 0;">Rigid Transformation</div><div class="a" style="left:13px;top:672px;width:394px;height:1px;background:#A0A0A0"></div><div class="a" style="left:13px;top:672px;width:1px;height:25px;background:#A0A0A0"></div><div class="a" style="left:406px;top:672px;width:1px;height:25px;background:#A0A0A0"></div><svg style="left:-2px;top:677px" width="13" height="12" viewBox="0 0 13 12"><rect x="0.5" y="0.5" width="12" height="11" fill="#fff" stroke="#A0A0A0" stroke-width="1"/><path d="M2.5 6 H11 M6.75 1.8 V10.2" stroke="#000" stroke-width="1.1"/></svg><div class="t" style="left:17px;top:677.06px;font-size:14.1px;color:#000;font-weight:bold;transform:scaleX(1.0153);transform-origin:0 0;">Information</div><div class="a" style="left:13px;top:696px;width:394px;height:1px;background:#A0A0A0"></div><div class="a" style="left:13px;top:696px;width:1px;height:25px;background:#A0A0A0"></div><div class="a" style="left:406px;top:696px;width:1px;height:25px;background:#A0A0A0"></div><svg style="left:-2px;top:701px" width="13" height="12" viewBox="0 0 13 12"><rect x="0.5" y="0.5" width="12" height="11" fill="#fff" stroke="#A0A0A0" stroke-width="1"/><path d="M2.5 6 H11 M6.75 1.8 V10.2" stroke="#000" stroke-width="1.1"/></svg><div class="t" style="left:17px;top:701.06px;font-size:14.1px;color:#000;font-weight:bold;transform:scaleX(0.9994);transform-origin:0 0;">Named Selection Creation</div><div class="a" style="left:13px;top:720px;width:394px;height:1px;background:#A0A0A0"></div><div class="a" style="left:13px;top:720px;width:1px;height:25px;background:#A0A0A0"></div><div class="a" style="left:406px;top:720px;width:1px;height:25px;background:#A0A0A0"></div><svg style="left:-2px;top:725px" width="13" height="12" viewBox="0 0 13 12"><rect x="0.5" y="0.5" width="12" height="11" fill="#fff" stroke="#A0A0A0" stroke-width="1"/><path d="M2.5 6 H11 M6.75 1.8 V10.2" stroke="#000" stroke-width="1.1"/></svg><div class="t" style="left:17px;top:725.06px;font-size:14.1px;color:#000;font-weight:bold;transform:scaleX(0.9840);transform-origin:0 0;">Advanced</div><div class="a" style="left:13px;top:744px;width:394px;height:1px;background:#A0A0A0"></div><div class="a" style="left:13px;top:744px;width:1px;height:25px;background:#A0A0A0"></div><div class="a" style="left:406px;top:744px;width:1px;height:25px;background:#A0A0A0"></div><svg style="left:-2px;top:749px" width="13" height="12" viewBox="0 0 13 12"><rect x="0.5" y="0.5" width="12" height="11" fill="#fff" stroke="#A0A0A0" stroke-width="1"/><path d="M2.5 6 H11" stroke="#000" stroke-width="1.1"/></svg><div class="t" style="left:17px;top:749.06px;font-size:14.1px;color:#000;font-weight:bold;transform:scaleX(0.9805);transform-origin:0 0;">Beta Options (Beta)</div><div class="a" style="left:13px;top:768px;width:394px;height:1px;background:#A0A0A0"></div><div class="a" style="left:13px;top:768px;width:1px;height:25px;background:#A0A0A0"></div><div class="a" style="left:406px;top:768px;width:1px;height:25px;background:#A0A0A0"></div><div class="a" style="left:195px;top:768px;width:1px;height:25px;background:#A0A0A0"></div><div class="t" style="left:17px;top:773.15px;font-size:14px;color:#1E1E1E;transform:scaleX(0.9546);transform-origin:0 0;">Show Body Wireframe (Beta)</div><div class="t" style="left:199px;top:773.15px;font-size:14px;color:#1E1E1E;transform:scaleX(0.9502);transform-origin:0 0;">No</div><div class="a" style="left:13px;top:792px;width:394px;height:1px;background:#A0A0A0"></div><div class="a" style="left:412px;top:37px;width:585px;height:1px;background:#F6F6F6"></div><svg style="left:425px;top:6px" width="8" height="27" viewBox="0 0 8 27"><g fill="#858585"><rect x="0" y="0" width="1" height="1"/><rect x="6" y="0" width="1" height="1"/><rect x="3" y="3" width="1" height="1"/><rect x="0" y="5" width="1" height="1"/><rect x="6" y="5" width="1" height="1"/><rect x="3" y="8" width="1" height="1"/><rect x="0" y="10" width="1" height="1"/><rect x="6" y="10" width="1" height="1"/><rect x="3" y="13" width="1" height="1"/><rect x="0" y="15" width="1" height="1"/><rect x="6" y="15" width="1" height="1"/><rect x="3" y="18" width="1" height="1"/><rect x="0" y="20" width="1" height="1"/><rect x="6" y="20" width="1" height="1"/><rect x="3" y="23" width="1" height="1"/><rect x="0" y="25" width="1" height="1"/><rect x="6" y="25" width="1" height="1"/></g></svg><svg style="left:445px;top:8px" width="23" height="23" viewBox="0 0 23 23"><circle cx="9.5" cy="9.5" r="8" fill="#F4F4F4" stroke="#333" stroke-width="2.2"/><path d="M15.5 15.5 L21 21" stroke="#333" stroke-width="3"/><path d="M4.5 9 H13 M5 9 L9 5.5 M5 9 L9 12.5" stroke="#D4A017" stroke-width="2.6"/></svg><svg style="left:477px;top:8px" width="23" height="23" viewBox="0 0 23 23"><circle cx="9.5" cy="9.5" r="8" fill="#F4F4F4" stroke="#A8A8A8" stroke-width="2.2"/><path d="M15.5 15.5 L21 21" stroke="#A8A8A8" stroke-width="3"/><path d="M5 9 H13.5 M13 9 L9 5.5 M13 9 L9 12.5" stroke="#B8B8B8" stroke-width="2.6"/></svg><div class="a" style="left:508px;top:6px;width:1px;height:28px;background:#C8CAD8"></div><div class="a" style="left:512px;top:3px;width:32px;height:31px;border:1px solid #3399FF;background:#EEEEF2"></div><svg style="left:519px;top:8px" width="20" height="21" viewBox="0 0 20 21"><path d="M2 5 L10 1 L18 5 V16 L10 20 L2 16 Z" fill="#555" stroke="#222" stroke-width="1"/><path d="M2 5 L10 9 L18 5 L10 1 Z" fill="#C8C8C8" stroke="#222" stroke-width="1"/><path d="M10 9 V20" stroke="#222"/><path d="M10 9 L18 5 V16 L10 20 Z" fill="#777"/></svg><svg style="left:549px;top:9px" width="21" height="19" viewBox="0 0 21 19"><path d="M1 5 L10.5 1 L20 5 V14 L10.5 18 L1 14 Z" fill="#8A8A8A"/><path d="M1 5 L10.5 9 L20 5 L10.5 1 Z" fill="#C8C8C8"/><path d="M10.5 9 L20 5 V14 L10.5 18 Z" fill="#6A6A6A"/></svg><svg style="left:580px;top:8px" width="24" height="22" viewBox="0 0 24 22"><rect x="1" y="11" width="7" height="6" fill="#D4A017" stroke="#222" stroke-width="1"/><rect x="7" y="14" width="7" height="7" fill="#D4A017" stroke="#222" stroke-width="1"/><path d="M10 1 L16 0 L22 3 V10 L16 12 L10 9 Z" fill="#fff" stroke="#333" stroke-width="1.2"/><path d="M10 4 L16 6 L22 3 M16 6 V12" stroke="#333" stroke-width="1" fill="none"/><path d="M2 8 L6 4 M20 15 L17 19" stroke="#555" stroke-width="1.2" fill="none"/></svg><div class="a" style="left:612px;top:6px;width:1px;height:28px;background:#C8CAD8"></div><svg style="left:621px;top:7px" width="23" height="23" viewBox="0 0 23 23"><rect x="0.5" y="0.5" width="9" height="9" fill="#fff" stroke="#333"/><rect x="12.5" y="12.5" width="10" height="10" fill="#fff" stroke="#333"/><path d="M17.5 12.5 V22.5 M12.5 17.5 H22.5" stroke="#333"/><path d="M10 3 L17 9 M14 9 H17.5 V5.5" stroke="#D4A017" stroke-width="2" fill="none"/></svg><svg style="left:652px;top:7px" width="23" height="23" viewBox="0 0 23 23"><rect x="0.5" y="0.5" width="9" height="9" fill="#fff" stroke="#999"/><rect x="12.5" y="12.5" width="10" height="10" fill="#fff" stroke="#777"/><path d="M10 3 L17 9 M14 9 H17.5 V5.5" stroke="#C0C0C0" stroke-width="2" fill="none"/></svg><div class="a" style="left:683px;top:6px;width:1px;height:28px;background:#C8CAD8"></div><svg style="left:693px;top:8px" width="24" height="22" viewBox="0 0 24 22"><path d="M3 8 A9 8 0 0 1 19 5" stroke="#555" stroke-width="2" fill="none"/><path d="M21 14 A9 8 0 0 1 5 17" stroke="#555" stroke-width="2" fill="none"/><path d="M17 3 L22 4 L20 9 Z" fill="#D4A017"/><path d="M7 19 L2 18 L4 13 Z" fill="#D4A017"/></svg><svg style="left:723px;top:17px" width="6" height="4" viewBox="0 0 6 4"><path d="M0 0 H6 L3 3 Z" fill="#777"/></svg><svg style="left:739px;top:8px" width="23" height="22" viewBox="0 0 23 22"><path d="M11.5 0 L15 4 H8 Z M11.5 22 L15 18 H8 Z M0 11 L4 7.5 V14.5 Z M23 11 L19 7.5 V14.5 Z" fill="#D4A017"/><rect x="7" y="7" width="4" height="4" fill="#222"/><rect x="12" y="12" width="4" height="4" fill="#222"/><rect x="12" y="7" width="4" height="4" fill="#fff" stroke="#222" stroke-width="0.8"/><rect x="7" y="12" width="4" height="4" fill="#fff" stroke="#222" stroke-width="0.8"/></svg><svg style="left:771px;top:8px" width="23" height="23" viewBox="0 0 23 23"><circle cx="9.5" cy="9.5" r="8" fill="#F4F4F4" stroke="#333" stroke-width="2.2"/><path d="M15.5 15.5 L21 21" stroke="#333" stroke-width="3"/><path d="M9 4 L12 7.5 H6 Z M9 14 L12 10.5 H6 Z" fill="#D4A017"/><path d="M5 9 H13" stroke="#D4A017" stroke-width="1"/></svg><svg style="left:803px;top:8px" width="23" height="23" viewBox="0 0 23 23"><circle cx="9.5" cy="9.5" r="8" fill="#F4F4F4" stroke="#333" stroke-width="2.2"/><path d="M15.5 15.5 L21 21" stroke="#333" stroke-width="3"/><path d="M9 4 V14 M4 9 H14" stroke="#D4A017" stroke-width="3"/></svg><svg style="left:835px;top:8px" width="23" height="23" viewBox="0 0 23 23"><circle cx="9.5" cy="9.5" r="8" fill="#F4F4F4" stroke="#333" stroke-width="2.2"/><path d="M15.5 15.5 L21 21" stroke="#333" stroke-width="3"/><path d="M5 7 L9 5 L13 7 V12 L9 14 L5 12 Z" fill="#5B8FD0" stroke="#fff" stroke-width="0.8"/></svg><svg style="left:867px;top:8px" width="23" height="23" viewBox="0 0 23 23"><circle cx="9.5" cy="9.5" r="8" fill="#F4F4F4" stroke="#333" stroke-width="2.2"/><path d="M15.5 15.5 L21 21" stroke="#333" stroke-width="3"/><path d="M5 7 L9 5 L13 7 V12 L9 14 L5 12 Z" fill="#5B8FD0"/><path d="M5 7 L9 9 V14 L5 12 Z" fill="#20C020"/></svg><svg style="left:899px;top:8px" width="23" height="23" viewBox="0 0 23 23"><circle cx="9.5" cy="9.5" r="8" fill="#F4F4F4" stroke="#333" stroke-width="2.2"/><path d="M15.5 15.5 L21 21" stroke="#333" stroke-width="3"/><path d="M9 4 L12 7.5 H6 Z M9 14 L12 10.5 H6 Z" fill="#D4A017"/><path d="M5 9 H13" stroke="#D4A017" stroke-width="1"/></svg><svg style="left:984px;top:6px" width="11" height="11" viewBox="0 0 11 11"><path d="M1 1 L5.5 5 L10 1 M1 6 L5.5 10 L10 6" stroke="#333" stroke-width="1.3" fill="none"/></svg><svg style="left:984px;top:24px" width="10" height="6" viewBox="0 0 10 6"><path d="M0 0 H10 L5 5 Z" fill="#1E1E1E"/></svg><div class="a" style="left:412px;top:38px;width:585px;height:589px;background:linear-gradient(to bottom,#6B8ADC 0%,#B4C5EE 49%,#FDFDFF 100%)"></div><div class="t" style="left:429px;top:56.42px;font-size:12.5px;color:#111;font-weight:bold;transform:scaleX(0.9997);transform-origin:0 0;">C: Harmonic Response</div><div class="t" style="left:429px;top:73.00px;font-size:13px;color:#111;transform:scaleX(1.0032);transform-origin:0 0;">Imported Pressure</div><div class="t" style="left:429px;top:90.00px;font-size:13px;color:#111;transform:scaleX(0.9571);transform-origin:0 0;">Frequency: 515. Hz</div><div class="t" style="left:429px;top:107.00px;font-size:13px;color:#111;transform:scaleX(0.9877);transform-origin:0 0;">Complex Component: Real</div><div class="t" style="left:429px;top:124.00px;font-size:13px;color:#111;transform:scaleX(0.9362);transform-origin:0 0;">Unit: Pa</div><div class="t" style="left:429px;top:141.00px;font-size:13px;color:#111;transform:scaleX(1.0108);transform-origin:0 0;">11/25/2024 10:23 AM</div><div class="a" style="left:429px;top:180px;width:18px;height:173px;background:#000"></div><div class="a" style="left:430px;top:183px;width:16px;height:17px;background:#FF0000"></div><div class="a" style="left:430px;top:201px;width:16px;height:18px;background:#FFAA00"></div><div class="a" style="left:430px;top:220px;width:16px;height:18px;background:#FFFF00"></div><div class="a" style="left:430px;top:239px;width:16px;height:18px;background:#AAFF00"></div><div class="a" style="left:430px;top:258px;width:16px;height:18px;background:#00FF00"></div><div class="a" style="left:430px;top:277px;width:16px;height:18px;background:#00FFAA"></div><div class="a" style="left:430px;top:296px;width:16px;height:18px;background:#00FFFF"></div><div class="a" style="left:430px;top:315px;width:16px;height:18px;background:#00AAFF"></div><div class="a" style="left:430px;top:334px;width:16px;height:17px;background:#0000FF"></div><div class="t" style="left:457px;top:174.00px;font-size:13px;color:#111;font-weight:bold;transform:scaleX(0.9896);transform-origin:0 0;">14926 Max</div><div class="t" style="left:457px;top:192.00px;font-size:13px;color:#222;transform:scaleX(0.9510);transform-origin:0 0;">12244</div><div class="t" style="left:457px;top:211.00px;font-size:13px;color:#222;transform:scaleX(0.9251);transform-origin:0 0;">9562.7</div><div class="t" style="left:457px;top:230.00px;font-size:13px;color:#222;transform:scaleX(0.9251);transform-origin:0 0;">6881.3</div><div class="t" style="left:457px;top:249.00px;font-size:13px;color:#222;transform:scaleX(0.9427);transform-origin:0 0;">4199.9</div><div class="t" style="left:457px;top:268.00px;font-size:13px;color:#222;transform:scaleX(0.9427);transform-origin:0 0;">1518.5</div><div class="t" style="left:457px;top:287.00px;font-size:13px;color:#222;transform:scaleX(0.9852);transform-origin:0 0;">-1162.9</div><div class="t" style="left:457px;top:306.00px;font-size:13px;color:#222;transform:scaleX(0.9522);transform-origin:0 0;">-3844.3</div><div class="t" style="left:457px;top:325.00px;font-size:13px;color:#222;transform:scaleX(0.9522);transform-origin:0 0;">-6525.7</div><div class="t" style="left:457px;top:344.00px;font-size:13px;color:#111;font-weight:bold;transform:scaleX(0.9987);transform-origin:0 0;">-9207.1 Min</div><div class="t" style="left:599.5px;top:564.50px;font-size:12.4px;color:#111;">0.000</div><div class="t" style="left:778.5px;top:564.50px;font-size:12.4px;color:#111;">0.090 (m)</div><div class="t" style="left:688px;top:596.50px;font-size:12.4px;color:#111;">0.045</div><div class="a" style="left:615px;top:580px;width:180px;height:12px;border:1px solid #000;background:#fff"></div><div class="a" style="left:615px;top:580px;width:90px;height:12px;background:#000"></div><svg style="left:920px;top:505px" width="75" height="75" viewBox="0 0 75 75">
<path d="M14 65 V35" stroke="#007700" stroke-width="2.2"/><path d="M10 35 L14 25 L18 35 Z" fill="#007700"/>
<path d="M14 65 H47" stroke="#AA0000" stroke-width="2.2"/><path d="M45 60.5 L55 65 L45 69.5 Z" fill="#CC0000"/>
<circle cx="14" cy="65" r="4.3" fill="#000080"/>
<circle cx="33" cy="45.5" r="4" fill="#20B8C0"/>
<path d="M16 57 H21 L16 62 H21" stroke="#2020FF" stroke-width="1" fill="none"/>
<text x="13" y="18" font-size="13" fill="#22AA22" font-family="Liberation Sans">Y</text>
<text x="60" y="66" font-size="13" fill="#FF3030" font-family="Liberation Sans">X</text>
</svg><div class="a" style="left:412px;top:632px;width:586px;height:27px;background:#EEEEF2;border-top:1px solid #CCCEDB;border-left:1px solid #CCCEDB"></div><div class="t" style="left:418.5px;top:638.30px;font-size:15px;color:#444;transform:scaleX(0.9898);transform-origin:0 0;">Data View</div><svg style="left:492px;top:642px" width="440" height="7" viewBox="0 0 440 7"><g fill="#858585"><rect x="0" y="0" width="1" height="1"/><rect x="0" y="5" width="1" height="1"/><rect x="3" y="3" width="1" height="1"/><rect x="5" y="0" width="1" height="1"/><rect x="5" y="5" width="1" height="1"/><rect x="8" y="3" width="1" height="1"/><rect x="10" y="0" width="1" height="1"/><rect x="10" y="5" width="1" height="1"/><rect x="13" y="3" width="1" height="1"/><rect x="15" y="0" width="1" height="1"/><rect x="15" y="5" width="1" height="1"/><rect x="18" y="3" width="1" height="1"/><rect x="20" y="0" width="1" height="1"/><rect x="20" y="5" width="1" height="1"/><rect x="23" y="3" width="1" height="1"/><rect x="25" y="0" width="1" height="1"/><rect x="25" y="5" width="1" height="1"/><rect x="28" y="3" width="1" height="1"/><rect x="30" y="0" width="1" height="1"/><rect x="30" y="5" width="1" height="1"/><rect x="33" y="3" width="1" height="1"/><rect x="35" y="0" width="1" height="1"/><rect x="35" y="5" width="1" height="1"/><rect x="38" y="3" width="1" height="1"/><rect x="40" y="0" width="1" height="1"/><rect x="40" y="5" width="1" height="1"/><rect x="43" y="3" width="1" height="1"/><rect x="45" y="0" width="1" height="1"/><rect x="45" y="5" width="1" height="1"/><rect x="48" y="3" width="1" height="1"/><rect x="50" y="0" width="1" height="1"/><rect x="50" y="5" width="1" height="1"/><rect x="53" y="3" width="1" height="1"/><rect x="55" y="0" width="1" height="1"/><rect x="55" y="5" width="1" height="1"/><rect x="58" y="3" width="1" height="1"/><rect x="60" y="0" width="1" height="1"/><rect x="60" y="5" width="1" height="1"/><rect x="63" y="3" width="1" height="1"/><rect x="65" y="0" width="1" height="1"/><rect x="65" y="5" width="1" height="1"/><rect x="68" y="3" width="1" height="1"/><rect x="70" y="0" width="1" height="1"/><rect x="70" y="5" width="1" height="1"/><rect x="73" y="3" width="1" height="1"/><rect x="75" y="0" width="1" height="1"/><rect x="75" y="5" width="1" height="1"/><rect x="78" y="3" width="1" height="1"/><rect x="80" y="0" width="1" height="1"/><rect x="80" y="5" width="1" height="1"/><rect x="83" y="3" width="1" height="1"/><rect x="85" y="0" width="1" height="1"/><rect x="85" y="5" width="1" height="1"/><rect x="88" y="3" width="1" height="1"/><rect x="90" y="0" width="1" height="1"/><rect x="90" y="5" width="1" height="1"/><rect x="93" y="3" width="1" height="1"/><rect x="95" y="0" width="1" height="1"/><rect x="95" y="5" width="1" height="1"/><rect x="98" y="3" width="1" height="1"/><rect x="100" y="0" width="1" height="1"/><rect x="100" y="5" width="1" height="1"/><rect x="103" y="3" width="1" height="1"/><rect x="105" y="0" width="1" height="1"/><rect x="105" y="5" width="1" height="1"/><rect x="108" y="3" width="1" height="1"/><rect x="110" y="0" width="1" height="1"/><rect x="110" y="5" width="1" height="1"/><rect x="113" y="3" width="1" height="1"/><rect x="115" y="0" width="1" height="1"/><rect x="115" y="5" width="1" height="1"/><rect x="118" y="3" width="1" height="1"/><rect x="120" y="0" width="1" height="1"/><rect x="120" y="5" width="1" height="1"/><rect x="123" y="3" width="1" height="1"/><rect x="125" y="0" width="1" height="1"/><rect x="125" y="5" width="1" height="1"/><rect x="128" y="3" width="1" height="1"/><rect x="130" y="0" width="1" height="1"/><rect x="130" y="5" width="1" height="1"/><rect x="133" y="3" width="1" height="1"/><rect x="135" y="0" width="1" height="1"/><rect x="135" y="5" width="1" height="1"/><rect x="138" y="3" width="1" height="1"/><rect x="140" y="0" width="1" height="1"/><rect x="140" y="5" width="1" height="1"/><rect x="143" y="3" width="1" height="1"/><rect x="145" y="0" width="1" height="1"/><rect x="145" y="5" width="1" height="1"/><rect x="148" y="3" width="1" height="1"/><rect x="150" y="0" width="1" height="1"/><rect x="150" y="5" width="1" height="1"/><rect x="153" y="3" width="1" height="1"/><rect x="155" y="0" width="1" height="1"/><rect x="155" y="5" width="1" height="1"/><rect x="158" y="3" width="1" height="1"/><rect x="160" y="0" width="1" height="1"/><rect x="160" y="5" width="1" height="1"/><rect x="163" y="3" width="1" height="1"/><rect x="165" y="0" width="1" height="1"/><rect x="165" y="5" width="1" height="1"/><rect x="168" y="3" width="1" height="1"/><rect x="170" y="0" width="1" height="1"/><rect x="170" y="5" width="1" height="1"/><rect x="173" y="3" width="1" height="1"/><rect x="175" y="0" width="1" height="1"/><rect x="175" y="5" width="1" height="1"/><rect x="178" y="3" width="1" height="1"/><rect x="180" y="0" width="1" height="1"/><rect x="180" y="5" width="1" height="1"/><rect x="183" y="3" width="1" height="1"/><rect x="185" y="0" width="1" height="1"/><rect x="185" y="5" width="1" height="1"/><rect x="188" y="3" width="1" height="1"/><rect x="190" y="0" width="1" height="1"/><rect x="190" y="5" width="1" height="1"/><rect x="193" y="3" width="1" height="1"/><rect x="195" y="0" width="1" height="1"/><rect x="195" y="5" width="1" height="1"/><rect x="198" y="3" width="1" height="1"/><rect x="200" y="0" width="1" height="1"/><rect x="200" y="5" width="1" height="1"/><rect x="203" y="3" width="1" height="1"/><rect x="205" y="0" width="1" height="1"/><rect x="205" y="5" width="1" height="1"/><rect x="208" y="3" width="1" height="1"/><rect x="210" y="0" width="1" height="1"/><rect x="210" y="5" width="1" height="1"/><rect x="213" y="3" width="1" height="1"/><rect x="215" y="0" width="1" height="1"/><rect x="215" y="5" width="1" height="1"/><rect x="218" y="3" width="1" height="1"/><rect x="220" y="0" width="1" height="1"/><rect x="220" y="5" width="1" height="1"/><rect x="223" y="3" width="1" height="1"/><rect x="225" y="0" width="1" height="1"/><rect x="225" y="5" width="1" height="1"/><rect x="228" y="3" width="1" height="1"/><rect x="230" y="0" width="1" height="1"/><rect x="230" y="5" width="1" height="1"/><rect x="233" y="3" width="1" height="1"/><rect x="235" y="0" width="1" height="1"/><rect x="235" y="5" width="1" height="1"/><rect x="238" y="3" width="1" height="1"/><rect x="240" y="0" width="1" height="1"/><rect x="240" y="5" width="1" height="1"/><rect x="243" y="3" width="1" height="1"/><rect x="245" y="0" width="1" height="1"/><rect x="245" y="5" width="1" height="1"/><rect x="248" y="3" width="1" height="1"/><rect x="250" y="0" width="1" height="1"/><rect x="250" y="5" width="1" height="1"/><rect x="253" y="3" width="1" height="1"/><rect x="255" y="0" width="1" height="1"/><rect x="255" y="5" width="1" height="1"/><rect x="258" y="3" width="1" height="1"/><rect x="260" y="0" width="1" height="1"/><rect x="260" y="5" width="1" height="1"/><rect x="263" y="3" width="1" height="1"/><rect x="265" y="0" width="1" height="1"/><rect x="265" y="5" width="1" height="1"/><rect x="268" y="3" width="1" height="1"/><rect x="270" y="0" width="1" height="1"/><rect x="270" y="5" width="1" height="1"/><rect x="273" y="3" width="1" height="1"/><rect x="275" y="0" width="1" height="1"/><rect x="275" y="5" width="1" height="1"/><rect x="278" y="3" width="1" height="1"/><rect x="280" y="0" width="1" height="1"/><rect x="280" y="5" width="1" height="1"/><rect x="283" y="3" width="1" height="1"/><rect x="285" y="0" width="1" height="1"/><rect x="285" y="5" width="1" height="1"/><rect x="288" y="3" width="1" height="1"/><rect x="290" y="0" width="1" height="1"/><rect x="290" y="5" width="1" height="1"/><rect x="293" y="3" width="1" height="1"/><rect x="295" y="0" width="1" height="1"/><rect x="295" y="5" width="1" height="1"/><rect x="298" y="3" width="1" height="1"/><rect x="300" y="0" width="1" height="1"/><rect x="300" y="5" width="1" height="1"/><rect x="303" y="3" width="1" height="1"/><rect x="305" y="0" width="1" height="1"/><rect x="305" y="5" width="1" height="1"/><rect x="308" y="3" width="1" height="1"/><rect x="310" y="0" width="1" height="1"/><rect x="310" y="5" width="1" height="1"/><rect x="313" y="3" width="1" height="1"/><rect x="315" y="0" width="1" height="1"/><rect x="315" y="5" width="1" height="1"/><rect x="318" y="3" width="1" height="1"/><rect x="320" y="0" width="1" height="1"/><rect x="320" y="5" width="1" height="1"/><rect x="323" y="3" width="1" height="1"/><rect x="325" y="0" width="1" height="1"/><rect x="325" y="5" width="1" height="1"/><rect x="328" y="3" width="1" height="1"/><rect x="330" y="0" width="1" height="1"/><rect x="330" y="5" width="1" height="1"/><rect x="333" y="3" width="1" height="1"/><rect x="335" y="0" width="1" height="1"/><rect x="335" y="5" width="1" height="1"/><rect x="338" y="3" width="1" height="1"/><rect x="340" y="0" width="1" height="1"/><rect x="340" y="5" width="1" height="1"/><rect x="343" y="3" width="1" height="1"/><rect x="345" y="0" width="1" height="1"/><rect x="345" y="5" width="1" height="1"/><rect x="348" y="3" width="1" height="1"/><rect x="350" y="0" width="1" height="1"/><rect x="350" y="5" width="1" height="1"/><rect x="353" y="3" width="1" height="1"/><rect x="355" y="0" width="1" height="1"/><rect x="355" y="5" width="1" height="1"/><rect x="358" y="3" width="1" height="1"/><rect x="360" y="0" width="1" height="1"/><rect x="360" y="5" width="1" height="1"/><rect x="363" y="3" width="1" height="1"/><rect x="365" y="0" width="1" height="1"/><rect x="365" y="5" width="1" height="1"/><rect x="368" y="3" width="1" height="1"/><rect x="370" y="0" width="1" height="1"/><rect x="370" y="5" width="1" height="1"/><rect x="373" y="3" width="1" height="1"/><rect x="375" y="0" width="1" height="1"/><rect x="375" y="5" width="1" height="1"/><rect x="378" y="3" width="1" height="1"/><rect x="380" y="0" width="1" height="1"/><rect x="380" y="5" width="1" height="1"/><rect x="383" y="3" width="1" height="1"/><rect x="385" y="0" width="1" height="1"/><rect x="385" y="5" width="1" height="1"/><rect x="388" y="3" width="1" height="1"/><rect x="390" y="0" width="1" height="1"/><rect x="390" y="5" width="1" height="1"/><rect x="393" y="3" width="1" height="1"/><rect x="395" y="0" width="1" height="1"/><rect x="395" y="5" width="1" height="1"/><rect x="398" y="3" width="1" height="1"/><rect x="400" y="0" width="1" height="1"/><rect x="400" y="5" width="1" height="1"/><rect x="403" y="3" width="1" height="1"/><rect x="405" y="0" width="1" height="1"/><rect x="405" y="5" width="1" height="1"/><rect x="408" y="3" width="1" height="1"/><rect x="410" y="0" width="1" height="1"/><rect x="410" y="5" width="1" height="1"/><rect x="413" y="3" width="1" height="1"/><rect x="415" y="0" width="1" height="1"/><rect x="415" y="5" width="1" height="1"/><rect x="418" y="3" width="1" height="1"/><rect x="420" y="0" width="1" height="1"/><rect x="420" y="5" width="1" height="1"/><rect x="423" y="3" width="1" height="1"/><rect x="425" y="0" width="1" height="1"/><rect x="425" y="5" width="1" height="1"/><rect x="428" y="3" width="1" height="1"/><rect x="430" y="0" width="1" height="1"/><rect x="430" y="5" width="1" height="1"/><rect x="433" y="3" width="1" height="1"/><rect x="435" y="0" width="1" height="1"/><rect x="435" y="5" width="1" height="1"/><rect x="438" y="3" width="1" height="1"/></g></svg><svg style="left:937px;top:642px" width="12" height="6" viewBox="0 0 12 6"><path d="M0 0 L11 0 L5.5 5.5 Z" fill="#1E1E1E"/></svg><svg style="left:957px;top:639px" width="10" height="13" viewBox="0 0 10 13"><path d="M2 1 H8 M3 1 V8 M7 1 V8 M1 8 H9 M5 8 V13" stroke="#1E1E1E" stroke-width="1.6" fill="none"/></svg><svg style="left:978px;top:639px" width="11" height="11" viewBox="0 0 11 11"><path d="M1 1 L10 10 M10 1 L1 10" stroke="#1E1E1E" stroke-width="1.7"/></svg><div class="a" style="left:412px;top:658px;width:586px;height:141px;background:#fff"></div><div class="a" style="left:412px;top:658px;width:586px;height:1px;background:#5A5A5A"></div><div class="a" style="left:412px;top:658px;width:2px;height:141px;background:#5A5A5A"></div><div class="a" style="left:414px;top:659px;width:562px;height:33px;background:#969CA1"></div><div class="t" style="left:422.7px;top:663.98px;font-size:24px;color:#fff;transform:scaleX(0.9436);transform-origin:0 0;">Imported Pressure</div><div class="a" style="left:976px;top:659px;width:21px;height:120px;background:#F0F0F0"></div><svg style="left:978px;top:675px" width="17" height="13" viewBox="0 0 17 13"><path d="M1.5 11 L8.5 3 L15.5 11" stroke="#606060" stroke-width="3.2" fill="none"/></svg><div class="a" style="left:977px;top:694px;width:19px;height:36px;background:#CDCDCD"></div><svg style="left:978px;top:751px" width="17" height="13" viewBox="0 0 17 13"><path d="M1.5 2 L8.5 10 L15.5 2" stroke="#606060" stroke-width="3.2" fill="none"/></svg><div class="a" style="left:414px;top:779px;width:583px;height:20px;background:#F0F0F0"></div><div class="a" style="left:448px;top:780px;width:494px;height:18px;background:#CDCDCD"></div><svg style="left:429px;top:781px" width="14" height="16" viewBox="0 0 14 16"><path d="M11 2 L4 8 L11 14" stroke="#606060" stroke-width="2.8" fill="none"/></svg><svg style="left:949px;top:781px" width="14" height="16" viewBox="0 0 14 16"><path d="M3 2 L10 8 L3 14" stroke="#606060" stroke-width="2.8" fill="none"/></svg><div class="a" style="left:423px;top:712px;width:545px;height:67px;background:#fff"></div><div class="a" style="left:424px;top:713px;width:19px;height:65px;background:#F2F2F2"></div><div class="a" style="left:444px;top:713px;width:523px;height:21px;background:#F4F4F4"></div><div class="a" style="left:423px;top:712px;width:545px;height:1px;background:#696969"></div><div class="a" style="left:423px;top:712px;width:1px;height:67px;background:#696969"></div><div class="a" style="left:967px;top:712px;width:1px;height:67px;background:#696969"></div><div class="a" style="left:442px;top:712px;width:2px;height:67px;background:#696969"></div><div class="a" style="left:423px;top:733px;width:545px;height:2px;background:#696969"></div><div class="a" style="left:423px;top:756px;width:20px;height:1px;background:#696969"></div><div class="a" style="left:444px;top:756px;width:523px;height:1px;background:#B4B4B4"></div><div class="a" style="left:423px;top:778px;width:20px;height:1px;background:#696969"></div><div class="a" style="left:444px;top:778px;width:523px;height:1px;background:#B4B4B4"></div><div class="a" style="left:600px;top:713px;width:1px;height:21px;background:#696969"></div><div class="a" style="left:600px;top:735px;width:1px;height:43px;background:#B4B4B4"></div><div class="a" style="left:762px;top:713px;width:1px;height:21px;background:#696969"></div><div class="a" style="left:762px;top:735px;width:1px;height:43px;background:#B4B4B4"></div><div class="a" style="left:931px;top:713px;width:1px;height:21px;background:#696969"></div><div class="a" style="left:931px;top:735px;width:1px;height:43px;background:#B4B4B4"></div><div class="t" style="left:448.7px;top:718.15px;font-size:14px;color:#1E1E1E;transform:scaleX(1.0476);transform-origin:0 0;">Magnitude [Real] (Pa)</div><div class="t" style="left:605.4px;top:718.15px;font-size:14px;color:#1E1E1E;transform:scaleX(1.0690);transform-origin:0 0;">Magnitude [Imag] (Pa)</div><div class="t" style="left:767.2px;top:718.15px;font-size:14px;color:#1E1E1E;transform:scaleX(1.0188);transform-origin:0 0;">Analysis Frequency (Hz)</div><div class="a" style="left:936px;top:713px;width:31px;height:21px;overflow:hidden"><div class="t" style="left:0;top:4.6px;font-size:14.6px;color:#1E1E1E">Scale</div></div><div class="t" style="left:429px;top:740.15px;font-size:14px;color:#1E1E1E;">1</div><div class="t" style="left:448.7px;top:740.15px;font-size:14px;color:#1E1E1E;transform:scaleX(0.9541);transform-origin:0 0;">File1:Pressure1</div><div class="t" style="left:605.4px;top:740.15px;font-size:14px;color:#1E1E1E;transform:scaleX(0.9694);transform-origin:0 0;">File1:Pressure2</div><div class="t" style="left:767.2px;top:740.15px;font-size:14px;color:#1E1E1E;transform:scaleX(1.0281);transform-origin:0 0;">515</div><div class="t" style="left:936px;top:740.15px;font-size:14px;color:#1E1E1E;">1</div><div class="t" style="left:428px;top:762.15px;font-size:14px;color:#1E1E1E;">*</div><svg style="left:0;top:0" width="998" height="800" viewBox="0 0 998 800"><defs><clipPath id="bc"><path d="M716,121 L705,124 L691,130 L675,137 L661,145 L645,155 L627,168 L614,178 L601,188 L590,199 L579,211 L592,224 L605,237 L620,253 L635,268 L650,284 L672,304 L695,323 L717,341 L751,367 L785,394 L810,414 L840,385 L814,362 L812,346 L809,318 L805,295 L798,267 L787,240 L770,208 L750,172 L730,140 Z"/></clipPath><linearGradient id="bg1" x1="0" y1="0" x2="1" y2="1"><stop offset="0" stop-color="#005A3E"/><stop offset="1" stop-color="#00472F"/></linearGradient><linearGradient id="sh" x1="0" y1="0" x2="1" y2="1"><stop offset="0" stop-color="#7C8898"/><stop offset="1" stop-color="#5C6775"/></linearGradient><linearGradient id="tg" gradientUnits="userSpaceOnUse" x1="610" y1="170" x2="760" y2="335"><stop offset="0" stop-color="#005E62"/><stop offset="1" stop-color="#004A4E"/></linearGradient></defs><path d="M716,121 L705,124 L691,130 L675,137 L661,145 L645,155 L627,168 L614,178 L601,188 L590,199 L579,211 L592,224 L605,237 L620,253 L635,268 L650,284 L672,304 L695,323 L717,341 L751,367 L785,394 L810,414 L840,385 L814,362 L812,346 L809,318 L805,295 L798,267 L787,240 L770,208 L750,172 L730,140 Z" fill="url(#bg1)"/><g clip-path="url(#bc)"><path d="M600,192 L615,180 L630,165 L638,160 L650,162 L662,172 L670,180 L682,206 L696,238 L712,261 L731,287 L746,306 L761,330 L761,336 L750,330 L720,309 L702,294 L690,279 L678,260 L664,240 L650,230 L632,220 L620,207 L610,196 Z" fill="url(#tg)"/><path d="M626,173 L632,168 L643,168 L650,178 L657,188 L668,202 L678,213 L687,226 L692,242 L698,264 L686,246 L664,226 L650,213 L638,199 L627,185 Z" fill="#004466"/><path d="M653,155 L678,141 L692,131 L685,146 L689,164 L699,181 L704,195 L702,204 L696,197 L678,178 L662,166 Z" fill="#005E0C"/><path d="M579,211 L590,200 L598,194 L612,197 L626,211 L638,225 L650,242 L660,260 L680,284 L700,320 L698,326 L672,304 L650,284 L635,268 L620,253 L605,237 L592,224 Z" fill="#005E0C"/><g transform="translate(624,244) rotate(48)"><ellipse cx="0" cy="0" rx="52" ry="15" fill="#3E6000"/></g><g transform="translate(620,240) rotate(48)"><ellipse cx="0" cy="0" rx="42" ry="12" fill="#5E5E00"/></g><g transform="translate(617,236) rotate(48)"><ellipse cx="0" cy="0" rx="30" ry="9" fill="#603E00"/></g><g transform="translate(617,235) rotate(50)"><ellipse cx="0" cy="0" rx="19" ry="5.5" fill="#640000"/></g><path d="M579,211 L590,199 L601,188 L614,178 L627,168 L645,155 L661,145 L675,137 L691,130 L705,124 L716,121" stroke="#006000" stroke-width="7" fill="none"/></g><path d="M806,300 L809,307 L816,322 L829,351 L814,362 L812,346 L809,318 L807,306 Z" fill="#00D08C"/><path d="M716,121 L705,124 L691,130 L675,137 L661,145 L645,155 L627,168 L614,178 L601,188 L590,199 L579,211" stroke="#E6EEF0" stroke-width="1" fill="none" stroke-dasharray="2 1"/><path d="M716,121 L730,140 L750,172 L770,208 L787,240 L798,267 L805,295 L809,318 L812,346 L814,362" stroke="#30D0A0" stroke-width="1.6" fill="none" transform="translate(0.8,0)"/><path d="M716,121 L730,140 L750,172 L770,208 L787,240 L798,267 L805,295 L809,318 L812,346 L814,362" stroke="#F0F4F0" stroke-width="1" fill="none" stroke-dasharray="2.5 1"/><path d="M579,211 L592,224 L605,237 L620,253 L635,268 L650,284 L672,304 L695,323 L717,341 L751,367 L785,394 L800,406" stroke="#D8E0EC" stroke-width="0.8" fill="none"/><path d="M811,401 L820,401 L828,414 L838,431 L816,460 L799,452 Z" fill="#353A42" stroke="#C8D4E0" stroke-width="0.6"/><path d="M828,414 L840,432 L816,460 Z" fill="#5A6470"/><path d="M819,400 L865,367 L876,390 L904,456 L900,459 L879,478 Z" fill="url(#sh)" stroke="#C8D4E0" stroke-width="0.6"/><path d="M865,366 L870,368 L882,395 L905,456 L900,459 L884,416 Z" fill="#98A6B6"/><path d="M804,401 L849,365 L865,366 L819,400 Z" fill="#464C55"/><path d="M788,389 L839,348 L849,365 L804,401 Z" fill="#808C9B" stroke="#D0DAE6" stroke-width="0.6"/><path d="M839,348 L852,347 Q861,350 865,366 L849,365 Z" fill="#A5B2C2"/><path d="M874,486 L894,465 L906,478 L891,496 Z" fill="#7F8B9A" stroke="#D0DAE6" stroke-width="0.6"/><path d="M894,465 L911,453 L920,470 L906,478 Z" fill="#95A3B3" stroke="#D0DAE6" stroke-width="0.6"/><path d="M780,332 H792 M786,326 V338" stroke="#6A8AD8" stroke-width="1"/><path d="M674.5,107.5 H708 L714.5,118 L708,128.5 H674.5 Z" fill="#0000FF" stroke="#000" stroke-width="1"/><text x="678" y="124" font-size="13" fill="#fff" font-family="Liberation Sans" textLength="22" lengthAdjust="spacingAndGlyphs">Min</text><rect x="713" y="115" width="6" height="7" fill="#000"/><path d="M714.5,120.5 L716,117 L717.5,120.5 Z" fill="#fff"/><path d="M561.5,215.5 H599 L606,226 L599,236.5 H561.5 Z" fill="#FF0000" stroke="#000" stroke-width="1"/><text x="565.8" y="231.6" font-size="13" fill="#fff" font-family="Liberation Sans" textLength="24" lengthAdjust="spacingAndGlyphs">Max</text><path d="M603,231 L606,226 H610 L612,228 V231 Z" fill="#000"/><path d="M606,229 L607.5,226.5 H609 L610.5,229 Z" fill="#fff"/><path d="M667.5,240.5 H785 L791,251 L785,261.5 H667.5 Z" fill="#FF3333" stroke="#222" stroke-width="1"/><text x="670.5" y="257" font-size="13" fill="#1A1A1A" font-family="Liberation Sans" textLength="106.6" lengthAdjust="spacingAndGlyphs">Imported Pressure</text></svg><div class="a" style="left:0px;top:0px;width:998px;height:1px;background:#000"></div><div class="a" style="left:0px;top:0px;width:1px;height:800px;background:#000"></div><div class="a" style="left:997px;top:0px;width:1px;height:800px;background:#000"></div><div class="a" style="left:0px;top:799px;width:998px;height:1px;background:#000"></div></body></html>
